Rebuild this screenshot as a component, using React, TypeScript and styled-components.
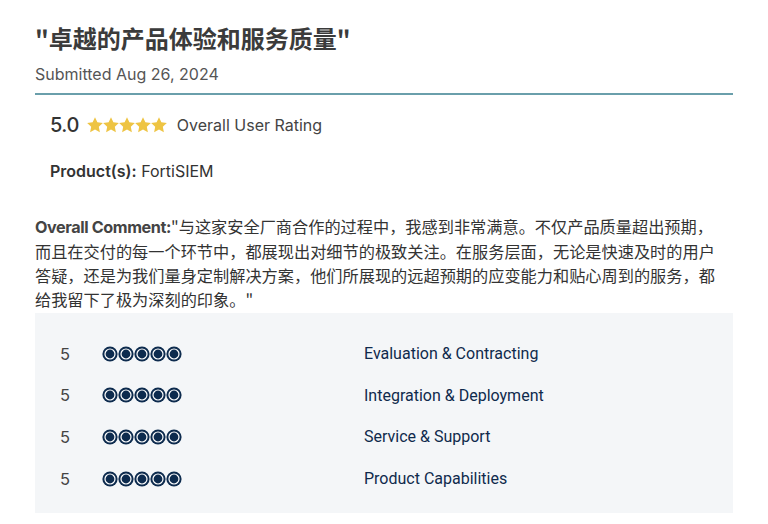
import React from "react";
import styled, { createGlobalStyle } from "styled-components";

const GlobalStyle = createGlobalStyle`
  html, body {
    margin: 0;
    padding: 0;
    background: #ffffff;
  }
  body {
    font-family: Inter, "Noto Sans", "Noto Sans CJK SC", sans-serif;
  }
`;

const subRatings = [
  { score: 5, label: "Evaluation & Contracting" },
  { score: 5, label: "Integration & Deployment" },
  { score: 5, label: "Service & Support" },
  { score: 5, label: "Product Capabilities" },
];

const commentLines = [
  "与这家安全厂商合作的过程中，我感到非常满意。不仅产品质量超出预期，",
  "而且在交付的每一个环节中，都展现出对细节的极致关注。在服务层面，无论是快速及时的用户",
  "答疑，还是为我们量身定制解决方案，他们所展现的远超预期的应变能力和贴心周到的服务，都",
  "给我留下了极为深刻的印象。\"",
];

const Star = () => (
  <svg width="16" height="16" viewBox="1.5 1.5 21 21">
    <path
      d="M12 1.8l3.1 6.6 7.2.9-5.3 5 1.4 7.2L12 18l-6.4 3.5L7 14.3l-5.3-5 7.2-.9z"
      fill="#eec443"
    />
  </svg>
);

const Dot = () => (
  <svg width="16" height="16" viewBox="0 0 16 16">
    <circle cx="8" cy="8" r="7.6" fill="#0d2b4e" />
    <circle cx="8" cy="8" r="5.6" fill="#ffffff" />
    <circle cx="8" cy="8" r="4.4" fill="#0d2b4e" />
  </svg>
);

export default function App() {
  return (
    <>
      <GlobalStyle />
      <Page>
        <Title>"卓越的产品体验和服务质量"</Title>
        <Submitted>Submitted Aug 26, 2024</Submitted>
        <Divider />
        <RatingRow>
          <Score>5.0</Score>
          <Stars>
            {[0, 1, 2, 3, 4].map((i) => (
              <Star key={i} />
            ))}
          </Stars>
          <RatingLabel>Overall User Rating</RatingLabel>
        </RatingRow>
        <ProductLine>
          <strong>Product(s):</strong> FortiSIEM
        </ProductLine>
        <Comment>
          <strong>Overall Comment:</strong>"
          {commentLines.map((line, i) => (
            <React.Fragment key={i}>
              {i > 0 && <br />}
              {line}
            </React.Fragment>
          ))}
        </Comment>
        <SubBox>
          {subRatings.map((r) => (
            <SubRow key={r.label}>
              <SubScore>{r.score}</SubScore>
              <Dots>
                {Array.from({ length: r.score }).map((_, i) => (
                  <Dot key={i} />
                ))}
              </Dots>
              <SubLabel>{r.label}</SubLabel>
            </SubRow>
          ))}
        </SubBox>
      </Page>
    </>
  );
}

const Page = styled.div`
  width: 698px;
  padding: 22px 0 0 35px;
  color: #333;
`;

const Title = styled.h1`
  margin: 0;
  font-family: "Noto Sans CJK SC", "Noto Sans", sans-serif;
  font-size: 24px;
  font-weight: 700;
  line-height: 32px;
  color: #3b3b3b;
`;

const Submitted = styled.div`
  margin-top: 8px;
  font-size: 16px;
  line-height: 24px;
  color: #555;
`;

const Divider = styled.div`
  margin-top: 7px;
  height: 2px;
  background: #6a9fab;
`;

const RatingRow = styled.div`
  display: flex;
  align-items: center;
  padding-left: 15px;
  margin-top: 17px;
  height: 26px;
`;

const Score = styled.span`
  font-size: 20px;
  font-weight: 500;
  color: #333;
  letter-spacing: -0.5px;
`;

const Stars = styled.span`
  display: flex;
  margin-left: 8px;
  svg {
    display: block;
  }
`;

const RatingLabel = styled.span`
  margin-left: 10px;
  font-size: 16px;
  color: #444;
`;

const ProductLine = styled.div`
  padding-left: 15px;
  margin-top: 21px;
  font-size: 16px;
  line-height: 24px;
  color: #333;

  strong {
    font-weight: 600;
  }
`;

const Comment = styled.p`
  margin: 31px 0 0;
  font-family: "Noto Sans CJK SC", Inter, sans-serif;
  font-size: 16.2px;
  line-height: 24px;
  color: #333;
  white-space: nowrap;

  strong {
    font-family: Inter, sans-serif;
    font-weight: 700;
    color: #444;
    letter-spacing: -0.4px;
  }
`;

const SubBox = styled.div`
  margin-top: 2px;
  background: #f4f6f8;
  padding: 20px 0 14px;
`;

const SubRow = styled.div`
  display: flex;
  align-items: center;
  height: 41.6px;
`;

const SubScore = styled.span`
  width: 67px;
  padding-left: 25px;
  box-sizing: border-box;
  font-size: 16.5px;
  color: #444;
`;

const Dots = styled.span`
  display: flex;
  width: 262px;
  svg {
    display: block;
  }
`;

const SubLabel = styled.span`
  font-family: Roboto, sans-serif;
  font-size: 16px;
  color: #0f2a4c;
`;
